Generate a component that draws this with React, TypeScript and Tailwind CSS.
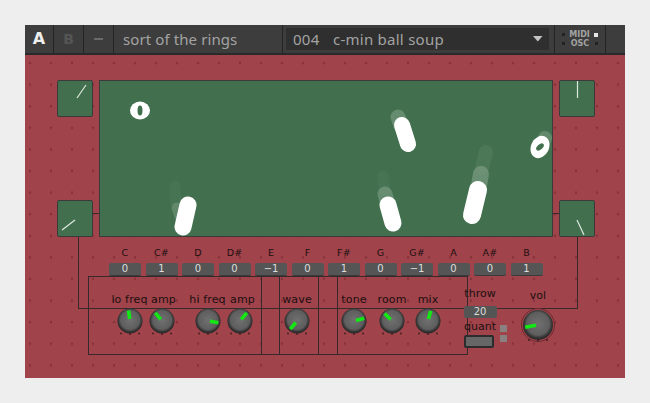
import React from 'react';

const notes = [
  ['C', '0'], ['C#', '1'], ['D', '0'], ['D#', '0'], ['E', '-1'], ['F', '0'],
  ['F#', '1'], ['G', '0'], ['G#', '-1'], ['A', '0'], ['A#', '0'], ['B', '1'],
];

const Pad = ({ line }: { line: [number, number, number, number] }) => (
  <div className="w-[36px] h-[37px] bg-[#42704f] border border-[#3a3a3a] rounded-[2px]">
    <svg width="34" height="35" viewBox="0 0 34 35">
      <line x1={line[0]} y1={line[1]} x2={line[2]} y2={line[3]} stroke="#dfe8df" strokeWidth="1.2" />
    </svg>
  </div>
);

const Knob = ({ angle, size = 32 }: { angle: number; size?: number }) => {
  const big = size > 32;
  const r = big ? 15 : 12.5;
  const c = size / 2;
  return (
    <svg width={size} height={size} viewBox={`0 0 ${size} ${size}`} className="block">
      <defs>
        <radialGradient id="knobFace" cx="50%" cy="46%" r="54%">
          <stop offset="0%" stopColor="#707070" />
          <stop offset="70%" stopColor="#5e5e5e" />
          <stop offset="84%" stopColor="#3a3a3a" />
          <stop offset="100%" stopColor="#222222" />
        </radialGradient>
      </defs>
      {big && <circle cx={c} cy={c} r={r + 1.5} fill="none" stroke="#6e2a30" strokeWidth="1" />}
      <circle cx={c} cy={c} r={r} fill="url(#knobFace)" />
      <circle cx={c - 9} cy={c + r} r="1" fill="#452023" />
      <circle cx={c} cy={c + r + 0.5} r="1" fill="#452023" />
      <circle cx={c + 9} cy={c + r} r="1" fill="#452023" />
      <line
        x1={c}
        y1={c - 2}
        x2={c}
        y2={c - r + 2}
        stroke="#14e814"
        strokeWidth="3.6"
        transform={`rotate(${angle} ${c} ${c})`}
      />
    </svg>
  );
};

const KnobCell = ({ label, angle, labelOffset = '' }: { label: string; angle: number; labelOffset?: string }) => (
  <div className="w-8 flex flex-col items-center">
    <div className={`h-[16px] leading-[16px] text-[11px] tracking-[0.15px] whitespace-nowrap text-[#1c0f11] ${labelOffset}`}>
      {label}
    </div>
    <div className="-mt-[3px]">
      <Knob angle={angle} />
    </div>
  </div>
);

const Balls = () => (
  <svg width="452" height="155" viewBox="100 81 452 155" className="block">
    <g stroke="#8aa88f" strokeLinecap="round" fill="none">
      <line x1="398" y1="117" x2="401" y2="126" strokeWidth="15" opacity="0.5" />
      <line x1="545" y1="138" x2="541" y2="146" strokeWidth="14" opacity="0.45" />
      <line x1="177" y1="208" x2="182" y2="222" strokeWidth="11" opacity="0.4" />
      <line x1="175" y1="186" x2="176" y2="204" strokeWidth="11" opacity="0.08" />
      <line x1="385" y1="194" x2="388" y2="205" strokeWidth="15" opacity="0.5" />
      <line x1="383" y1="176" x2="385" y2="190" strokeWidth="11" opacity="0.08" />
      <line x1="481" y1="174" x2="478" y2="191" strokeWidth="16" opacity="0.55" />
      <line x1="486" y1="152" x2="482" y2="168" strokeWidth="14" opacity="0.15" />
    </g>
    <g stroke="#ffffff" strokeLinecap="round" fill="none">
      <line x1="402" y1="125" x2="408" y2="144" strokeWidth="16" />
      <line x1="188" y1="205" x2="183" y2="227" strokeWidth="17" />
      <line x1="388" y1="205" x2="393" y2="223" strokeWidth="17" />
      <line x1="478" y1="190" x2="472" y2="215" strokeWidth="18" />
    </g>
    <ellipse cx="140" cy="110.5" rx="10" ry="9" fill="#ffffff" />
    <ellipse cx="140" cy="110.5" rx="2.5" ry="5" fill="#42704f" />
    <ellipse cx="540" cy="147" rx="9" ry="11.5" fill="#ffffff" transform="rotate(25 540 147)" />
    <ellipse cx="540" cy="147" rx="2.5" ry="4.5" fill="#42704f" transform="rotate(50 540 147)" />
  </svg>
);

export default function App() {
  return (
    <div className="min-h-[403px] bg-[#eeeeee] pt-[25px] pl-[25px] font-['Noto_Sans','Open_Sans',sans-serif]">
      <div className="w-[600px] h-[353px] flex flex-col">
        <header className="h-[30px] bg-[#3d3d3d] border-b-2 border-[#2a2a2a] flex items-stretch text-[#a3a3a3]">
          <div className="w-[29px] border-r border-[#242424] flex items-center justify-center text-[16px] font-bold text-[#eeeeee] font-['DejaVu_Sans',sans-serif]">A</div>
          <div className="w-[30px] border-r border-[#242424] flex items-center justify-center text-[14px] font-bold text-[#555555] font-['DejaVu_Sans',sans-serif]">B</div>
          <div className="w-[30px] border-r border-[#242424] flex items-center justify-center">
            <div className="w-[9px] h-[2px] bg-[#6a6a6a]" />
          </div>
          <div className="w-[169px] border-r border-[#242424] pl-[9px] flex items-center text-[15px] tracking-[0.1px]">sort of the rings</div>
          <div className="w-[272px] pl-[3px] pr-[5px] flex items-center border-r border-[#242424]">
            <div className="w-full h-[22px] bg-[#2f2f2f] flex items-center pl-[7px] pr-[5px] text-[15px] tracking-[0.25px]">
              <span className="w-[40px]">004</span>
              <span className="flex-1">c-min ball soup</span>
              <svg width="10" height="6" viewBox="0 0 10 6" className="mr-[1px]"><path d="M0 0h9.5L4.8 5.5z" fill="#c4c4c4" /></svg>
            </div>
          </div>
          <div className="w-[51px] border-r border-[#242424] flex flex-col justify-center gap-[0px] px-[7px] text-[8px] leading-[9px] font-bold font-['DejaVu_Sans',sans-serif]">
            <div className="flex items-center justify-between">
              <span className="w-[3px] h-[3px] bg-[#222222]" />
              <span>MIDI</span>
              <span className="w-[4px] h-[4px] bg-[#e6e6e6]" />
            </div>
            <div className="flex items-center justify-between">
              <span className="w-[3px] h-[3px] bg-[#222222]" />
              <span>OSC</span>
              <span className="w-[3px] h-[3px] bg-[#222222]" />
            </div>
          </div>
        </header>

        <main className="relative flex-1 bg-[#a0434a] bg-[radial-gradient(circle_at_5px_8px,#87323a_1px,transparent_1.6px)] bg-[size:21px_21.6px] pt-[25px] font-['DejaVu_Sans',sans-serif] text-[#1c0f11]">
          {/* wires sit over the panel */}
          <div className="absolute left-[53px] top-[182px] w-px h-[71px] bg-[#35292b]" />
          <div className="absolute left-[552px] top-[182px] w-px h-[71px] bg-[#35292b]" />
          <div className="absolute left-[53px] top-[253px] w-[500px] h-px bg-[#35292b]" />
          <div className="absolute left-[68px] top-[158px] w-[6px] h-px bg-[#35292b]" />
          <div className="absolute left-[528px] top-[158px] w-[6px] h-px bg-[#35292b]" />
          <div className="absolute left-[63px] top-[221px] w-[380px] h-[79px] border border-[#35292b]" />
          <div className="absolute left-[236px] top-[221px] w-px h-[79px] bg-[#35292b]" />
          <div className="absolute left-[254px] top-[221px] w-px h-[79px] bg-[#35292b]" />
          <div className="absolute left-[293px] top-[221px] w-px h-[79px] bg-[#35292b]" />
          <div className="absolute left-[312px] top-[221px] w-px h-[79px] bg-[#35292b]" />

          <div className="relative flex gap-[6px] pl-[32px]">
            <div className="h-[157px] flex flex-col justify-between">
              <Pad line={[19, 17, 28, 4]} />
              <Pad line={[4, 29, 17, 19]} />
            </div>
            <div className="w-[454px] h-[157px] bg-[#42704f] border border-[#3a3a3a]">
              <Balls />
            </div>
            <div className="h-[157px] flex flex-col justify-between">
              <Pad line={[17.5, 0, 17.5, 17]} />
              <Pad line={[17, 19, 24, 34]} />
            </div>
          </div>

          <div className="relative mt-[9px] pl-[84px] flex gap-[4.5px]">
            {notes.map(([name, value]) => (
              <div key={name} className="w-[32px] flex flex-col items-center">
                <div className="h-[17px] leading-[14px] text-[9.5px] tracking-[0.2px]">{name}</div>
                <div className="w-full h-[13px] bg-[#555555] rounded-[2px] border-b border-[#3a3a3a] text-[#dddddd] text-[10px] leading-[12px] text-center">
                  {value === '-1' ? '\u22121' : value}
                </div>
              </div>
            ))}
          </div>

          <div className="relative flex items-start pl-[89px] mt-[16px]">
            <KnobCell label="lo freq" angle={-8} labelOffset="-ml-[1px]" />
            <KnobCell label="amp" angle={-40} labelOffset="ml-[3px]" />
            <div className="w-[14px]" />
            <KnobCell label="hi freq" angle={100} labelOffset="-ml-[1px]" />
            <KnobCell label="amp" angle={40} labelOffset="ml-[5px]" />
            <div className="w-[25px]" />
            <KnobCell label="wave" angle={-140} />
            <div className="w-[25px]" />
            <KnobCell label="tone" angle={75} />
            <div className="w-[6px]" />
            <KnobCell label="room" angle={-45} />
            <div className="w-[4px]" />
            <KnobCell label="mix" angle={15} />
            <div className="w-[19px]" />
            <div className="w-[34px] flex flex-col items-center -mt-[5px]">
              <div className="h-[14px] leading-[14px] text-[11px] whitespace-nowrap">throw</div>
              <div className="mt-[5px] w-[33px] h-[12px] bg-[#555555] rounded-[2px] text-[#dddddd] text-[10px] leading-[12px] text-center">20</div>
              <div className="mt-[2px] h-[14px] leading-[14px] text-[11px] whitespace-nowrap">quant</div>
              <div className="mt-[1px] self-start ml-[1px] w-[30px] h-[13px] bg-[#666666] border-2 border-[#2c2c2c] rounded-[2px]" />
            </div>
            <div className="ml-[3px] mt-[33px] flex flex-col gap-[3px]">
              <div className="w-[7px] h-[7px] bg-[#8a8080]" />
              <div className="w-[7px] h-[7px] bg-[#8a8080]" />
            </div>
            <div className="ml-[8px] w-[46px] flex flex-col items-center">
              <div className="h-[16px] leading-[16px] text-[11px] -mt-[4px]">vol</div>
              <div className="mt-[3px]">
                <Knob angle={-100} size={36} />
              </div>
            </div>
          </div>
        </main>
      </div>
    </div>
  );
}
